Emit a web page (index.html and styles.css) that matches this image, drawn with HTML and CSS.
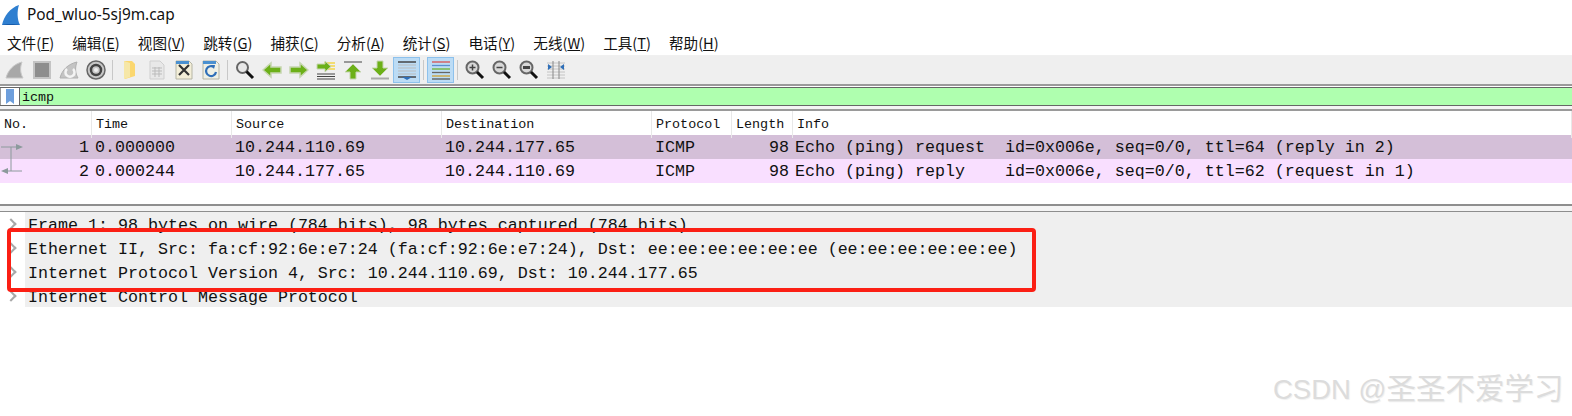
FILE: index.html
```html
<!DOCTYPE html>
<html>
<head>
  <title>Pod_wluo-5sj9m.cap</title>
  <meta http-equiv="Content-Type" content="text/html;charset=utf-8" />
  <link rel="stylesheet" href="styles.css">
</head>
<body>
  <div class="titlebar">
    <svg class="fin" width="20" height="22" viewBox="0 0 20 22"><path d="M1 21C3 12 9 4 18 1c-2 6-2 14 1 20z" fill="#2f7fd0"/><path d="M1 21c2-1 14-1 18 0z" fill="#0f4f9c"/></svg>
    <span class="filename">Pod_wluo-5sj9m.cap</span>
  </div>
  <div class="menubar">
    <span>文件(<u>F</u>)</span>
    <span>编辑(<u>E</u>)</span>
    <span>视图(<u>V</u>)</span>
    <span>跳转(<u>G</u>)</span>
    <span>捕获(<u>C</u>)</span>
    <span>分析(<u>A</u>)</span>
    <span>统计(<u>S</u>)</span>
    <span>电话(<u>Y</u>)</span>
    <span>无线(<u>W</u>)</span>
    <span>工具(<u>T</u>)</span>
    <span>帮助(<u>H</u>)</span>
  </div>
  <div class="toolbar">
    <div class="tool"><svg width="20" height="20" viewBox="0 0 20 20"><path d="M1 18C3 10 9 4 17 2c-2 5-2 11 1 16z" fill="#a8a8a8" stroke="#c8c8c8"/></svg></div>
    <div class="tool"><svg width="20" height="20" viewBox="0 0 20 20"><rect x="2" y="2" width="16" height="16" fill="#8e8e8e" stroke="#c4c4c4" stroke-width="2"/></svg></div>
    <div class="tool"><svg width="20" height="20" viewBox="0 0 20 20"><path d="M1 18C3 10 9 4 18 2c-2 5-2 11 1 16z" fill="#c4c4c4" stroke="#b0b0b0"/><path d="M8 9a4.500 4.500 0 1 0 6 0" fill="none" stroke="#f4f4f4" stroke-width="2.500"/></svg></div>
    <div class="tool"><svg width="20" height="20" viewBox="0 0 20 20"><circle cx="10" cy="10" r="9" fill="#c8c8c8" stroke="#666" stroke-width="1.500"/><circle cx="10" cy="10" r="5" fill="none" stroke="#444" stroke-width="2.500"/><circle cx="10" cy="10" r="2" fill="#eee"/></svg></div>
    <i class="sep"></i>
    <div class="tool"><svg width="20" height="20" viewBox="0 0 20 20"><path d="M4 1h8l3 3v12l-10 3z" fill="#fbd76f"/><path d="M4 1l6 2v14l-6 2z" fill="#f6e7a8"/></svg></div>
    <div class="tool"><svg width="20" height="20" viewBox="0 0 20 20"><path d="M3 1h10l4 4v14H3z" fill="#e8e8e8" stroke="#cfcfcf"/><path d="M5 8h10M5 11h10M5 14h10M8 7v10M12 7v10" stroke="#bbb"/></svg></div>
    <div class="tool"><svg width="20" height="20" viewBox="0 0 20 20"><path d="M2 1h13l3 3v15H2z" fill="#f3eed8" stroke="#b5b5a5"/><path d="M2 1h13v3H2z" fill="#4a90d0"/><path d="M5 5l10 10M15 5L5 15" stroke="#333" stroke-width="2.200"/></svg></div>
    <div class="tool"><svg width="20" height="20" viewBox="0 0 20 20"><path d="M2 1h13l3 3v15H2z" fill="#eef0e6" stroke="#b5b5a5"/><path d="M2 1h13v3H2z" fill="#4a90d0"/><path d="M13 7a5 5 0 1 0 2 5" fill="none" stroke="#2f6fb8" stroke-width="2.200"/><path d="M10 5l4 0-1 4z" fill="#2f6fb8"/></svg></div>
    <i class="sep"></i>
    <div class="tool"><svg width="20" height="20" viewBox="0 0 20 20"><circle cx="7.500" cy="7.500" r="5.500" fill="#e8e8e8" stroke="#666" stroke-width="2"/><path d="M11.500 11.500L18 18" stroke="#111" stroke-width="3"/></svg></div>
    <div class="tool"><svg width="20" height="20" viewBox="0 0 20 20"><path d="M1 10l8-7v4h10v6H9v4z" fill="#6cb018" stroke="#c6d6b0" stroke-width="1.500"/></svg></div>
    <div class="tool"><svg width="20" height="20" viewBox="0 0 20 20"><path d="M19 10l-8-7v4H1v6h10v4z" fill="#6cb018" stroke="#c6d6b0" stroke-width="1.500"/></svg></div>
    <div class="tool"><svg width="20" height="20" viewBox="0 0 20 20"><path d="M8 3h11M12 6h7M12 9h7" stroke="#f3d64a" stroke-width="1.500"/><path d="M1 14h18M1 16.500h18M1 19h18" stroke="#444" stroke-width="1.200"/><path d="M1 4h8V1l6 5.500-6 5.500V9H1z" fill="#6cb018" stroke="#c6d6b0"/></svg></div>
    <div class="tool"><svg width="20" height="20" viewBox="0 0 20 20"><path d="M1 2h18" stroke="#999" stroke-width="2"/><path d="M10 4l8 8h-5v7H7v-7H2z" fill="#6cb018" stroke="#c6d6b0"/></svg></div>
    <div class="tool"><svg width="20" height="20" viewBox="0 0 20 20"><path d="M1 18.500h18" stroke="#aaa" stroke-width="2"/><path d="M10 16l8-8h-5V1H7v7H2z" fill="#6cb018" stroke="#c6d6b0"/></svg></div>
    <div class="tool on"><svg width="20" height="20" viewBox="0 0 20 20"><path d="M1 2h18" stroke="#444" stroke-width="1.500"/><path d="M1 5h18M1 8h18M1 11h18M1 14h18" stroke="#bbb"/><path d="M1 17h18" stroke="#444" stroke-width="1.500"/><path d="M5 17h10l-5 3z" fill="#2f6fb8"/></svg></div>
    <i class="sep"></i>
    <div class="tool on"><svg width="20" height="20" viewBox="0 0 20 20"><path d="M1 2h18" stroke="#d85050" stroke-width="1.300"/><path d="M1 5.500h18" stroke="#5a8fd0" stroke-width="1.300"/><path d="M1 9h18" stroke="#6cb030" stroke-width="1.300"/><path d="M1 12.500h18" stroke="#666" stroke-width="1.300"/><path d="M1 16h18" stroke="#d0a030" stroke-width="1.300"/><path d="M1 19h18" stroke="#555" stroke-width="1.300"/></svg></div>
    <i class="sep"></i>
    <div class="tool"><svg width="20" height="20" viewBox="0 0 20 20"><circle cx="7.500" cy="7.500" r="6" fill="#d8d8d8" stroke="#666" stroke-width="2"/><path d="M4.500 7.500h6M7.500 4.500v6" stroke="#444" stroke-width="1.500"/><path d="M12 12l6 6" stroke="#111" stroke-width="3"/></svg></div>
    <div class="tool"><svg width="20" height="20" viewBox="0 0 20 20"><circle cx="7.500" cy="7.500" r="6" fill="#d8d8d8" stroke="#666" stroke-width="2"/><path d="M4.500 7.500h6" stroke="#444" stroke-width="1.500"/><path d="M12 12l6 6" stroke="#111" stroke-width="3"/></svg></div>
    <div class="tool"><svg width="20" height="20" viewBox="0 0 20 20"><circle cx="7.500" cy="7.500" r="6" fill="#d8d8d8" stroke="#666" stroke-width="2"/><rect x="4" y="6" width="7" height="3" fill="#444"/><path d="M12 12l6 6" stroke="#111" stroke-width="3"/></svg></div>
    <div class="tool"><svg width="20" height="20" viewBox="0 0 20 20"><path d="M1 3h18M1 6h18M1 9h18M1 12h18M1 15h18M1 18h18" stroke="#c4c4c4"/><path d="M7 1v18M13 1v18" stroke="#888"/><path d="M2 4l4 3-4 3zM18 4l-4 3 4 3z" fill="#2f6fb8"/></svg></div>
  </div>
  <div class="filter">
    <div class="bookmark"><svg width="10" height="15" viewBox="0 0 10 15"><path d="M1 0h8v15l-4-3-4 3z" fill="#6e9fdc"/></svg></div>
    <div class="filtertext">icmp</div>
  </div>
  <div class="gap-top"></div>
  <div class="packets">
    <div class="row head">
      <div class="c no">No.</div>
      <div class="c time">Time</div>
      <div class="c addr">Source</div>
      <div class="c addr">Destination</div>
      <div class="c proto">Protocol</div>
      <div class="c len">Length</div>
      <div class="c info">Info</div>
    </div>
    <div class="row pkt req">
      <div class="c no"><svg width="24" height="24" viewBox="0 0 24 24"><path d="M1 12h18M11 12v12" stroke="#8c9a9c" stroke-width="1"/><path d="M16 9l7 3-7 3z" fill="#8c9a9c"/></svg><span>1</span></div>
      <div class="c time">0.000000</div>
      <div class="c addr">10.244.110.69</div>
      <div class="c addr">10.244.177.65</div>
      <div class="c proto">ICMP</div>
      <div class="c len">98</div>
      <div class="c info">Echo (ping) request  id=0x006e, seq=0/0, ttl=64 (reply in 2)</div>
    </div>
    <div class="row pkt rep">
      <div class="c no"><svg width="24" height="24" viewBox="0 0 24 24"><path d="M4 12h18M11 0v12" stroke="#8c9a9c" stroke-width="1"/><path d="M8 9l-7 3 7 3z" fill="#8c9a9c"/></svg><span>2</span></div>
      <div class="c time">0.000244</div>
      <div class="c addr">10.244.177.65</div>
      <div class="c addr">10.244.110.69</div>
      <div class="c proto">ICMP</div>
      <div class="c len">98</div>
      <div class="c info">Echo (ping) reply    id=0x006e, seq=0/0, ttl=62 (request in 1)</div>
    </div>
  </div>
  <div class="splitter"></div>
  <div class="details">
    <div class="line">Frame 1: 98 bytes on wire (784 bits), 98 bytes captured (784 bits)</div>
    <div class="line">Ethernet II, Src: fa:cf:92:6e:e7:24 (fa:cf:92:6e:e7:24), Dst: ee:ee:ee:ee:ee:ee (ee:ee:ee:ee:ee:ee)</div>
    <div class="line">Internet Protocol Version 4, Src: 10.244.110.69, Dst: 10.244.177.65</div>
    <div class="line">Internet Control Message Protocol</div>
  </div>
  <div class="redbox"></div>
  <div class="watermark">CSDN @<span class="wm-cjk">圣圣不爱学习</span></div>
</body>
</html>
```
FILE: styles.css
```css
body {
  margin: 0;
  width: 1572px;
  height: 416px;
  overflow: hidden;
  background: #fff;
  color: #111;
  font-family: "Noto Sans", "Noto Sans CJK SC", sans-serif;
  position: relative;
}
.titlebar {
  height: 29px;
  display: flex;
  align-items: center;
  padding-left: 1px;
}
.fin { margin-right: 6px; }
.filename {
  font-size: 15.4px;
}
.menubar {
  height: 27px;
  display: flex;
  align-items: center;
  gap: 18px;
  padding-left: 7px;
  font-family: "Noto Sans CJK SC", sans-serif;
  font-size: 14.6px;
  border-bottom: 1px solid #f0f0f0;
  box-sizing: border-box;
}
.toolbar {
  height: 30px;
  background: #efefef;
  display: flex;
  align-items: center;
  padding-left: 1px;
  box-sizing: border-box;
  border-bottom: 2px solid #9a9a9a;
}
.tool {
  width: 27px;
  height: 26px;
  box-sizing: border-box;
  display: flex;
  align-items: center;
  justify-content: center;
}
.tool.on {
  background: #bcdcf5;
  border: 1px solid #8dc1ec;
}
.sep {
  width: 1px;
  height: 20px;
  background: #c8c8c8;
  margin: 0 3px;
}
.filter {
  height: 17px;
  margin-top: 1px;
  display: flex;
  background: #afffaf;
  border-top: 1px solid #666;
  border-bottom: 1px solid #666;
}
.bookmark {
  width: 18px;
  background: #fff;
  border-right: 1px solid #666;
  border-left: 1px solid #999;
  display: flex;
  align-items: center;
  justify-content: center;
}
.filtertext {
  padding-left: 2px;
  font-family: "Liberation Mono", monospace;
  font-size: 13.4px;
  line-height: 19px;
}
.gap-top {
  height: 3px;
  background: #f4f4f4;
  border-bottom: 2px solid #9a9a9a;
}
.row {
  display: grid;
  grid-template-columns: 92px 140px 210px 210px 80px 61px 1fr;
  font-family: "Liberation Mono", monospace;
}
.head {
  height: 24px;
  line-height: 27px;
  font-size: 13.4px;
}
.head .c {
  border-right: 1px solid #e8e8e8;
  padding-left: 4px;
}
.pkt {
  height: 24px;
  line-height: 25px;
  font-size: 16.67px;
  white-space: pre;
}
.req { background: #d4bfd8; }
.rep { background: #f9dfff; }
.pkt .c { padding-left: 3px; }
.pkt .no {
  display: flex;
  justify-content: space-between;
  padding: 0 3px 0 0;
}
.pkt .len {
  text-align: right;
  padding: 0 4px 0 0;
}
.pkt .info { padding-left: 2px; }
.splitter {
  height: 5px;
  margin-top: 21px;
  background: #f4f4f4;
  border-top: 2px solid #8e8e8e;
  border-bottom: 1px solid #8e8e8e;
}
.details {
  height: 95px;
  margin-left: 25px;
  padding-top: 1px;
  box-sizing: border-box;
  background: #efefef;
  font-family: "Liberation Mono", monospace;
  font-size: 16.67px;
}
.line {
  height: 24px;
  line-height: 26px;
  padding-left: 3px;
  white-space: pre;
  position: relative;
}
.line:last-child {
  height: 22px;
  overflow: hidden;
}
.line::before {
  content: "";
  position: fixed;
  margin: 7px 0 0 -21px;
  width: 8px;
  height: 8px;
  box-sizing: border-box;
  border-top: 2px solid #a8a8a8;
  border-right: 2px solid #a8a8a8;
  transform: rotate(45deg);
}
.redbox {
  position: absolute;
  left: 7px;
  top: 228px;
  width: 1029px;
  height: 64px;
  box-sizing: border-box;
  border: 4px solid #fb1f14;
  border-radius: 4px;
}
.watermark {
  position: absolute;
  left: 1273px;
  top: 374px;
  line-height: 30px;
  font-family: "Liberation Sans", "Noto Sans CJK SC", sans-serif;
  font-size: 27.5px;
  color: #dcdcdc;
  text-shadow: 1px 1px 1px #f0f0f0;
  white-space: nowrap;
}
.wm-cjk { font-size: 29.5px; }
```
